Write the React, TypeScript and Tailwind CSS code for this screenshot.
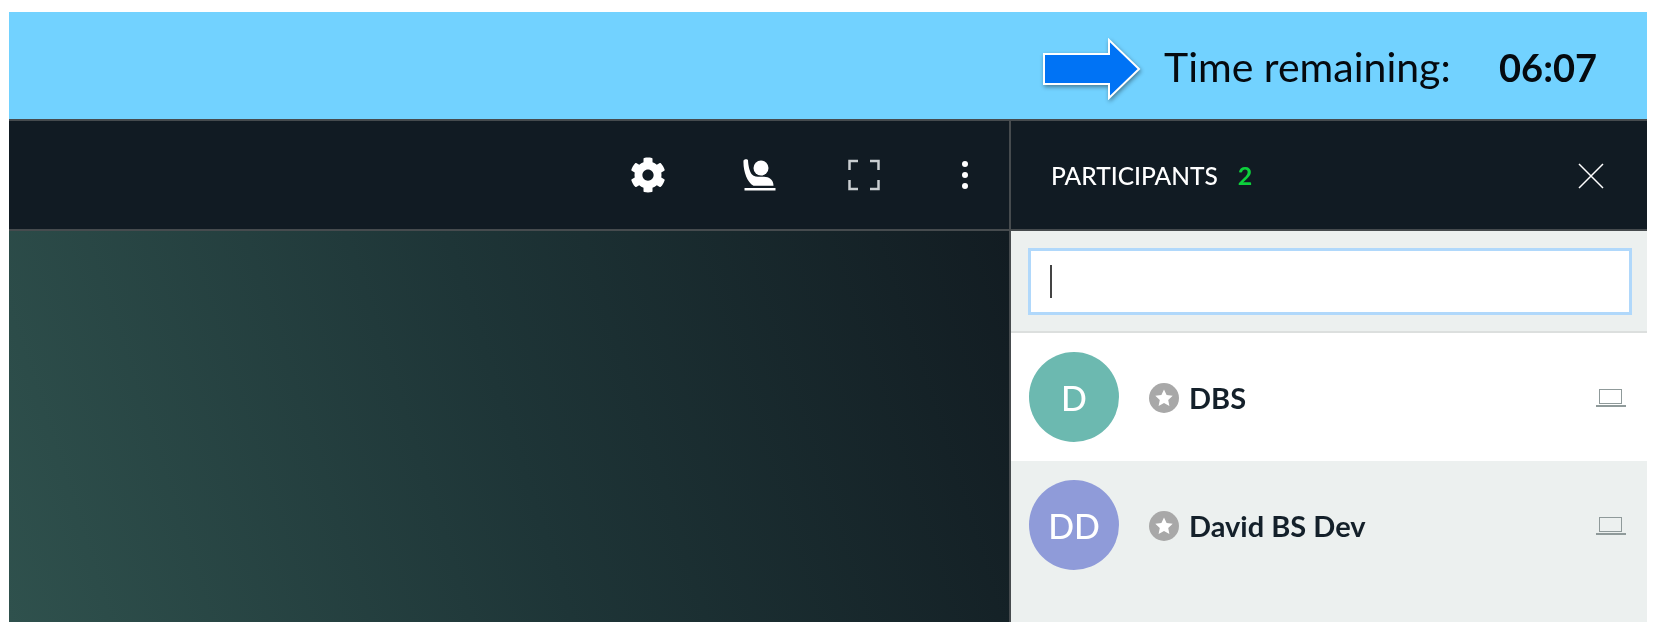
import { FaCog } from 'react-icons/fa'

const font = "font-['Lato','Noto_Sans',sans-serif]"

function StarBadge() {
    return (
        <svg viewBox="0 0 30 30" className="w-[30px] h-[30px] shrink-0">
            <circle cx="15" cy="15" r="15" fill="#a8a8a8" />
            <path d="M15 6.5l2.6 5.6 6.1.7-4.5 4.2 1.2 6-5.4-3-5.4 3 1.2-6-4.5-4.2 6.100-.7z" fill="#fff" />
        </svg>
    )
}

function Laptop() {
    return (
        <svg viewBox="0 0 30 20" className="w-[30px] h-[20px] shrink-0" fill="none" stroke="#8f9a9a">
            <rect x="3.5" y="1.5" width="22" height="14" strokeWidth="1" />
            <path d="M0 18h30" strokeWidth="2" />
        </svg>
    )
}

function SeatIcon() {
    return (
        <svg viewBox="0 0 34 34" className="w-[34px] h-[34px] text-white" fill="currentColor">
            <circle cx="19" cy="10" r="7.500" />
            <path d="M1.500 2.500c1-1.500 4-1.800 4.500-.2.300 5 1.200 11 4 14.200 2.500 2.800 7 2.200 12 2.300 5 .1 9.500 3 9.500 9H11.500C5 24 1 13 1.500 2.500z" />
            <rect x="2.500" y="30" width="31" height="2.500" />
        </svg>
    )
}

function FullscreenIcon() {
    return (
        <svg viewBox="0 0 32 32" className="w-[32px] h-[32px]" fill="none" stroke="#c9ced1" strokeWidth="2.500">
            <path d="M10 2H1.500v9M22 2h8.500v9M10 30H1.500v-9M22 30h8.500v-9" />
        </svg>
    )
}

function Participant({ initials, name, avatar, row }: { initials: string, name: string, avatar: string, row: string }) {
    return (
        <div className={`h-[128px] flex items-center pl-[18px] pr-[21px] ${row}`}>
            <div className={`w-[90px] h-[90px] rounded-full flex items-center justify-center text-white text-[34px] font-medium blur-[0.4px] ${avatar}`}>
                {initials}
            </div>
            <div className="ml-[30px] mr-[10px] mt-[2px]"><StarBadge /></div>
            <span className="flex-1 mt-[2px] text-[29px] font-bold text-[#14202a] blur-[0.4px]">{name}</span>
            <div className="mt-[2px]"><Laptop /></div>
        </div>
    )
}

export default function App() {
    return (
        <div className={`w-[1674px] h-[644px] bg-white pt-3 pl-[9px] pr-[27px] ${font}`}>
            <div className="h-[109px] bg-[#72d2ff] flex items-center justify-end pt-[3px] pr-[50px] border-b-2 border-[#464b4e]">
                <svg viewBox="0 0 100 62" className="w-[100px] h-[62px] mr-[22px] mt-[4px] drop-shadow-[1px_2px_2px_rgba(0,0,0,0.4)]">
                    <path d="M2 16h65V2l30 29-30 29V46H2z" fill="#0073f5" stroke="#fff" strokeWidth="2" />
                </svg>
                <span className="text-[41px] text-[#050a0f] w-[335px] blur-[0.4px]">Time remaining:</span>
                <span className="text-[38px] font-bold text-[#050a0f] blur-[0.4px]">06:07</span>
            </div>
            <div className="h-[501px] flex">
                <div className="flex-1 flex flex-col">
                    <div className="h-[110px] shrink-0 bg-[#111b23] border-b-2 border-[#464b4e] flex items-center justify-end">
                        <FaCog className="w-[36px] h-[36px] text-white mr-[76px]" />
                        <div className="mr-[72px]"><SeatIcon /></div>
                        <div className="mr-[82px]"><FullscreenIcon /></div>
                        <div className="flex flex-col gap-[5px] mr-[41px]">
                            <div className="w-[6px] h-[6px] rounded-full bg-white" />
                            <div className="w-[6px] h-[6px] rounded-full bg-white" />
                            <div className="w-[6px] h-[6px] rounded-full bg-white" />
                        </div>
                    </div>
                    <div className="flex-1 bg-[linear-gradient(72deg,#2f514d_0%,#1e3537_50%,#121c22_100%)]" />
                </div>
                <div className="w-[638px] shrink-0 border-l-2 border-[#464b4e] flex flex-col">
                    <div className="h-[110px] shrink-0 bg-[#111b23] border-b-2 border-[#464b4e] flex items-center pt-[2px] pl-[40px] pr-[42px]">
                        <span className="text-[24.500px] font-medium text-white blur-[0.3px]">PARTICIPANTS</span>
                        <span className="ml-[20px] text-[25px] font-bold text-[#0dd13c] blur-[0.3px]">2</span>
                        <svg viewBox="0 0 28 28" className="ml-auto w-[28px] h-[28px]" stroke="#fff" strokeWidth="1.500">
                            <path d="M2 2l24 24M26 2L2 26" />
                        </svg>
                    </div>
                    <div className="flex-1 bg-[#ecf0ef] flex flex-col">
                        <div className="h-[102px] shrink-0 border-b-2 border-[#dcdfde] pt-[17px] pl-[17px] pr-[15px]">
                            <div className="h-[67px] bg-white border-[3px] border-[#b0d8fb] flex items-center pl-[19px]">
                                <div className="w-[2px] h-[33px] bg-[#444]" />
                            </div>
                        </div>
                        <Participant initials="D" name="DBS" avatar="bg-[#6cb9b0]" row="bg-white" />
                        <Participant initials="DD" name="David BS Dev" avatar="bg-[#8f9bd9]" row="bg-[#ecf0ef]" />
                    </div>
                </div>
            </div>
        </div>
    )
}
